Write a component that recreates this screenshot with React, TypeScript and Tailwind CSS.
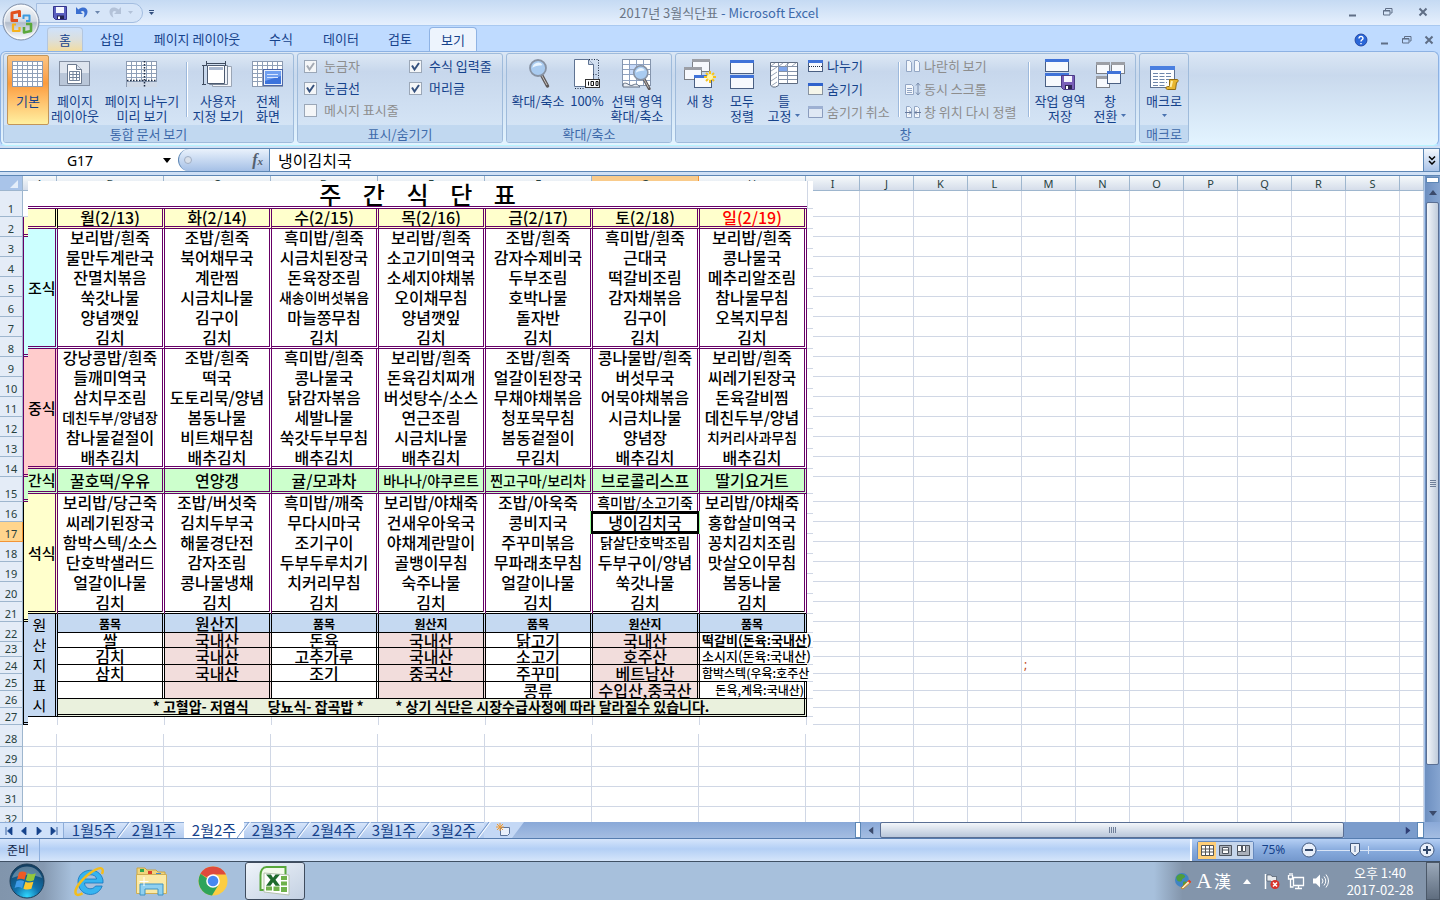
import React from 'react';
import clsx from 'clsx';

const COLUMNS = ['A', 'B', 'C', 'D', 'E', 'F', 'G', 'H', 'I', 'J', 'K', 'L', 'M', 'N', 'O', 'P', 'Q', 'R', 'S', ''];

const rowHeight = (row: number) => {
  if (row === 1) return 'h-[26px]';
  if (row === 15) return 'h-[25px]';
  if (row === 23) return 'h-[15px]';
  if (row >= 24 && row <= 27) return 'h-[17px]';
  if (row === 28) return 'h-[22px]';
  return 'h-[20px]';
};

// First column of the sheet: start row -> merged block
const MERGED: Record<number, { span: number; color: string }> = {
  2: { span: 1, color: 'bg-[#ffffcc] border-[#660066]' },
  3: { span: 6, color: 'bg-[#ccffff] border-[#660066]' },
  9: { span: 6, color: 'bg-[#ffcccc] border-[#660066]' },
  15: { span: 1, color: 'bg-[#ccffcc] border-[#660066]' },
  16: { span: 6, color: 'bg-[#ffffcc] border-black' },
  22: { span: 6, color: 'bg-[#c5d9f1] border-black' },
};

const DAYS = ['월(2/13)', '화(2/14)', '수(2/15)', '목(2/16)', '금(2/17)', '토(2/18)', '일(2/19)'];

const BREAKFAST = [
  ['보리밥/흰죽', '조밥/흰죽', '흑미밥/흰죽', '보리밥/흰죽', '조밥/흰죽', '흑미밥/흰죽', '보리밥/흰죽'],
  ['물만두계란국', '북어채무국', '시금치된장국', '소고기미역국', '감자수제비국', '근대국', '콩나물국'],
  ['잔멸치볶음', '계란찜', '돈육장조림', '소세지야채볶', '두부조림', '떡갈비조림', '메추리알조림'],
  ['쑥갓나물', '시금치나물', '새송이버섯볶음', '오이채무침', '호박나물', '감자채볶음', '참나물무침'],
  ['양념깻잎', '김구이', '마늘쫑무침', '양념깻잎', '돌자반', '김구이', '오복지무침'],
  ['김치', '김치', '김치', '김치', '김치', '김치', '김치'],
];

const LUNCH = [
  ['강낭콩밥/흰죽', '조밥/흰죽', '흑미밥/흰죽', '보리밥/흰죽', '조밥/흰죽', '콩나물밥/흰죽', '보리밥/흰죽'],
  ['들깨미역국', '떡국', '콩나물국', '돈육김치찌개', '얼갈이된장국', '버섯무국', '씨레기된장국'],
  ['삼치무조림', '도토리묵/양념', '닭감자볶음', '버섯탕수/소스', '무채야채볶음', '어묵야채볶음', '돈육갈비찜'],
  ['데친두부/양념장', '봄동나물', '세발나물', '연근조림', '청포묵무침', '시금치나물', '데친두부/양념'],
  ['참나물겉절이', '비트채무침', '쑥갓두부무침', '시금치나물', '봄동겉절이', '양념장', '치커리사과무침'],
  ['배추김치', '배추김치', '배추김치', '배추김치', '무김치', '배추김치', '배추김치'],
];

const SNACK = [['꿀호떡/우유', '연양갱', '귤/모과차', '바나나/야쿠르트', '찐고구마/보리차', '브로콜리스프', '딸기요거트']];

const DINNER = [
  ['보리밥/당근죽', '조밥/버섯죽', '흑미밥/깨죽', '보리밥/야채죽', '조밥/아욱죽', '흑미밥/소고기죽', '보리밥/야채죽'],
  ['씨레기된장국', '김치두부국', '무다시마국', '건새우아욱국', '콩비지국', '냉이김치국', '홍합살미역국'],
  ['함박스텍/소스', '해물경단전', '조기구이', '야채계란말이', '주꾸미볶음', '닭살단호박조림', '꽁치김치조림'],
  ['단호박샐러드', '감자조림', '두부두루치기', '골뱅이무침', '무파래초무침', '두부구이/양념', '맛살오이무침'],
  ['얼갈이나물', '콩나물냉채', '치커리무침', '숙주나물', '얼갈이나물', '쑥갓나물', '봄동나물'],
  ['김치', '김치', '김치', '김치', '김치', '김치', '김치'],
];

const ORIGINS = [
  ['쌀', '국내산', '돈육', '국내산', '닭고기', '국내산', '떡갈비(돈육:국내산)'],
  ['김치', '국내산', '고추가루', '국내산', '소고기', '호주산', '소시지(돈육:국내산)'],
  ['삼치', '국내산', '조기', '중국산', '주꾸미', '베트남산', '함박스텍(우육:호주산'],
  ['', '', '', '', '콩류', '수입산,중국산', '돈육,계육:국내산)'],
];

/* ---------- Icons ---------- */

const Caret = ({ className = '' }: { className?: string }) => (
  <svg viewBox="0 0 5 3" className={clsx('inline-block w-[5px] h-[3px]', className)} fill="currentColor">
    <path d="M0 0h5L2.5 3z" />
  </svg>
);

const Arrow = ({ className = '' }: { className?: string }) => (
  <svg viewBox="0 0 8 5" className={clsx('h-[5px] w-2', className)} fill="currentColor">
    <path d="M0 0h8L4 5z" />
  </svg>
);

const OfficeLogo = () => (
  <svg viewBox="0 0 38 38" className="size-[38px]">
    <defs>
      <linearGradient id="orb" x1="0" y1="0" x2="0" y2="1">
        <stop offset="0" stopColor="#f8fafc" />
        <stop offset=".48" stopColor="#d3dae4" />
        <stop offset=".52" stopColor="#b2bccb" />
        <stop offset="1" stopColor="#fdfeff" />
      </linearGradient>
    </defs>
    <circle cx="19" cy="19" r="18" fill="url(#orb)" stroke="#7f8fa8" />
    <circle cx="19" cy="19" r="16.5" fill="none" stroke="#fff" strokeOpacity=".7" />
    <g fill="none" strokeLinejoin="round">
      <path d="M16 17.500H10V10l7.500-1.500V14" stroke="#e2501c" strokeWidth="3" />
      <path d="M21.500 16v-3.500h6V18H24" stroke="#3c9be0" strokeWidth="2" />
      <path d="M14 21.500h-3v6.500h6.500v-4" stroke="#f6b21c" strokeWidth="2.200" />
      <path d="M24 21h5v7l-7 1.500V24" stroke="#5aa83a" strokeWidth="2.600" />
    </g>
  </svg>
);

const SaveIcon = () => (
  <svg viewBox="0 0 14 14" className="size-[14px]">
    <path d="M.5.5h13v13h-11l-2-2z" fill="#5a5fc0" stroke="#34348c" />
    <path d="M3 1h8v6H3z" fill="#f4f7ff" />
    <path d="M4 9.500h7V13H4z" fill="#23234f" />
    <path d="M5 10.500h2V13H5z" fill="#fff" />
  </svg>
);

const UndoIcon = ({ className = '' }: { className?: string }) => (
  <svg viewBox="0 0 14 13" className={clsx('w-[14px] h-[13px]', className)}>
    <path d="M1 1v7h7L5.600 5.700C8.500 3.800 10.800 5.500 8.600 11.800 14.600 8.200 13.300 1.100 7.600 1.600 5.900 1.800 4.500 2.600 3.400 3.500z" fill="currentColor" />
  </svg>
);

const GridIcon = ({ cols = 5, rows = 5 }: { cols?: number; rows?: number }) => (
  <g>
    <rect x=".5" y="3.500" width="30" height="25" fill="#fff" stroke="#8c9bb2" />
    {Array.from({ length: rows }, (_, i) => (
      <path key={i} d={`M1 ${7.5 + i * 4}h29`} stroke="#8fa0b8" />
    ))}
    {Array.from({ length: cols }, (_, i) => (
      <path key={`c${i}`} d={`M${5.5 + i * 5} 4v24`} stroke="#8fa0b8" />
    ))}
  </g>
);

const Icon32 = ({ children }: { children: React.ReactNode }) => (
  <svg viewBox="0 0 32 32" className="size-8 shrink-0">{children}</svg>
);

const MiniWindow = ({ x, y, w, h, gray = false }: { x: number; y: number; w: number; h: number; gray?: boolean }) => (
  <g>
    <rect x={x + 0.5} y={y + 0.5} width={w} height={h} fill="#f7f9fd" stroke={gray ? '#7b7f86' : '#4a5f82'} />
    <rect x={x} y={y} width={w + 1} height="3" fill={gray ? '#9c9fa6' : '#3f72d8'} />
  </g>
);

const NormalViewIcon = () => <Icon32><GridIcon /></Icon32>;

const PageLayoutIcon = () => (
  <Icon32>
    <rect x=".5" y="3.500" width="30" height="24" fill="#dde4ee" stroke="#8490a3" />
    <path d="M1 15h29v12H1z" fill="#b9c6d8" />
    <path d="M8.500 6.500h9l5 5v14h-14z" fill="#fff" stroke="#6c7a8f" />
    <path d="M17.500 6.500v5h5" fill="#dbe3ee" stroke="#6c7a8f" />
    <path d="M10.500 13.500h10v9h-10zM10.500 16.500h10M10.500 19.500h10M14 13.500v9M17.500 13.500v9" fill="none" stroke="#74849b" />
  </Icon32>
);

const PageBreakIcon = () => (
  <Icon32>
    <GridIcon />
    <path d="M1 24h30v5H1z" fill="#cfd9e7" />
    <path d="M1 22.500h30M18.500 3v26" stroke="#1e2c44" strokeWidth="1.500" strokeDasharray="1.500 1.500" />
  </Icon32>
);

const CustomViewIcon = () => (
  <Icon32>
    <path d="M10.500 8.500h19v20h-19z" fill="#f4f6fa" stroke="#9aa5b5" />
    <path d="M7.500 7.500h18v19h-18z" fill="#eef2f8" stroke="#7b8798" />
    <path d="M5.500 7.500h17v18h-17z" fill="#fff" stroke="#4c5a70" />
    <path d="M7 9h14v3H7z" fill="#a9b8d0" />
    <path d="M4 5.500h20M4.500 3v5M23.500 3v5M1.500 7v19M0 7.500h4M0 26.500h4" stroke="#3f4c60" fill="none" />
  </Icon32>
);

const FullScreenIcon = () => (
  <Icon32>
    <GridIcon />
    <rect x="11.500" y="11.500" width="19" height="16" fill="#e8f0fc" stroke="#4d68a8" />
    <rect x="13" y="13" width="16" height="13" fill="#3c73dc" />
    <path d="M13 13h16v5L13 23z" fill="#6f9ff0" />
    <path d="M15 16.500h11M15 19.500h11" stroke="#d6e5ff" />
  </Icon32>
);

const Magnifier = ({ x = 0, y = 0 }: { x?: number; y?: number }) => (
  <g transform={`translate(${x} ${y})`}>
    <path d="M13 16l6.500 12" stroke="#5f5a5a" strokeWidth="3.500" strokeLinecap="round" />
    <path d="M13.500 17l5.500 10" stroke="#c9c4c0" strokeWidth="1" />
    <circle cx="10" cy="10" r="8" fill="#a9cbf0" stroke="#8792a3" strokeWidth="1.800" />
    <path d="M4.500 10a5.500 5.500 0 0 1 10-3c-2 1-7 0-10 3z" fill="#e8f4ff" />
  </g>
);

const Zoom100Icon = () => (
  <Icon32>
    <path d="M3.500 1.500h14l5 5v22h-19z" fill="#fff" stroke="#5f7392" />
    <path d="M17.500 1.500v5h5" fill="#cdd9ea" stroke="#5f7392" />
    <path d="M18 1.500h9.500V22M4 30.500h10M22 16.500h5" fill="none" stroke="#1f2c45" strokeDasharray="1 1.500" />
    <rect x="14.500" y="21.500" width="14" height="8" fill="#fff" stroke="#333" />
    <path d="M17.500 23.500v4M20 23.500h2.500v4H20zM25 23.500h2v4h-2z" fill="none" stroke="#111" />
  </Icon32>
);

const ZoomSelectionIcon = () => (
  <Icon32>
    <rect x="1.500" y="1.500" width="28" height="26" fill="#fff" stroke="#8494ac" />
    <path d="M8 6h14v11H8z" fill="#c6dafa" />
    <path d="M2 6.500h27M2 11.500h27M2 16.500h27M2 22.500h27M8.500 2v25M15.500 2v25M22.500 2v25" stroke="#8fa2c0" />
    <path d="M2 26c4-3 6 3 10 1s5 0 7 2H2z" fill="#e9edf3" stroke="#5f6c80" />
    <g transform="translate(11 6) scale(.88)"><Magnifier /></g>
  </Icon32>
);

const NewWindowIcon = () => (
  <Icon32>
    <MiniWindow x={8} y={1} w={17} h={12} gray />
    <MiniWindow x={0} y={9} w={17} h={12} gray />
    <MiniWindow x={10} y={17} w={17} h={12} />
    <path d="M26 13v12M20 19h12M22 15l8 8M30 15l-8 8" stroke="#f6c21a" strokeWidth="2" />
    <circle cx="26" cy="19" r="3" fill="#fff6a8" />
  </Icon32>
);

const ArrangeIcon = () => (
  <Icon32>
    <MiniWindow x={4} y={2} w={23} h={13} />
    <MiniWindow x={4} y={17} w={23} h={13} />
  </Icon32>
);

const FreezeIcon = () => (
  <Icon32>
    <path d="M2.500 4.500h27v21h-19v2l-3 1.500h-3l-2-2z" fill="#fff" stroke="#5f6c80" />
    <path d="M10 8h10v5H10z" fill="#7fa5ea" />
    <path d="M3 8.500h26M10 13.500h19M10 17.500h19M10 21.500h19M10.500 5v23M19.500 5v20" stroke="#8593aa" />
    <path d="M3 8l4-3M11 8l4-3M17 8l4-3M24 8l4-3M3 13l6-4M3 18l6-4M3 23l6-4M3 28l6-4" stroke="#99a5b7" />
  </Icon32>
);

const SaveWorkspaceIcon = () => (
  <Icon32>
    <MiniWindow x={1} y={1} w={23} h={12} />
    <MiniWindow x={1} y={15} w={23} h={13} />
    <path d="M17.500 17.500h13v14h-11l-2-2z" fill="#7a5fb8" stroke="#4a3a86" />
    <path d="M20 18h8v6h-8z" fill="#f6f5ff" />
    <path d="M21 27h7v4h-7z" fill="#2c2450" />
    <path d="M22 28h2v3h-2z" fill="#fff" />
  </Icon32>
);

const SwitchWindowIcon = () => (
  <Icon32>
    <MiniWindow x={2} y={4} w={13} h={11} gray />
    <MiniWindow x={17} y={4} w={13} h={11} gray />
    <MiniWindow x={2} y={18} w={13} h={11} gray />
    <MiniWindow x={13} y={13} w={13} h={12} />
  </Icon32>
);

const MacroIcon = () => (
  <Icon32>
    <rect x="2.500" y="8.500" width="24" height="21" fill="#fdfeff" stroke="#5d7191" />
    <path d="M2 8h25v4H2z" fill="#4a7fe0" />
    <path d="M5 15.500h19M5 18.500h19M5 21.500h19M5 24.500h14M5 27.500h12" stroke="#6d86ab" strokeDasharray="5 1.500" />
    <path d="M21.500 21.500h8c1 0 1 3-1 3l-1 7h-8c-2 0-2-3 0-3h2z" fill="#e8b62f" stroke="#8f6a12" />
    <path d="M24 23l-1.500 6" stroke="#fff0a8" strokeWidth="2" />
  </Icon32>
);

const SmallIcon = ({ kind }: { kind: string }) => (
  <svg viewBox="0 0 16 14" className="w-4 h-[14px] shrink-0">
    {kind === 'split' && (
      <>
        <MiniWindow x={0} y={1} w={14} h={11} />
        <path d="M1 7.500h13" stroke="#1e2c44" strokeDasharray="1 1" />
      </>
    )}
    {kind === 'hide' && (
      <>
        <path d="M.5 1.500h14v11H.5z" fill="#f6f6ea" stroke="#333f55" strokeDasharray="1 1" />
        <path d="M0 1h15v3H0z" fill="#2f62cc" />
      </>
    )}
    {kind === 'unhide' && (
      <>
        <path d="M.5 1.500h14v11H.5z" fill="#dfe8f4" stroke="#8a9cbd" />
        <path d="M0 1h15v3H0z" fill="#9db0d2" />
      </>
    )}
    {kind === 'side' && <path d="M1.500 1.500h3l2 2v9h-5zM9.500 1.500h3l2 2v9h-5z" fill="#f3f7fc" stroke="#93a6c4" />}
    {kind === 'sync' && (
      <>
        <path d="M.5 2.500h6l2 2v8h-8zM2 6.500h5M2 8.500h5M2 10.500h5" fill="#f3f7fc" stroke="#93a6c4" />
        <path d="M13 1v12M11 3.500L13 1l2 2.500M11 10.500L13 13l2-2.500" fill="none" stroke="#7d8fae" />
      </>
    )}
    {kind === 'reset' && (
      <>
        <path d="M1.500 1.500h3l2 2v9h-5zM9.500 1.500h3l2 2v9h-5z" fill="#f3f7fc" stroke="#93a6c4" />
        <path d="M0 7.500h6M4 5.500l2 2-2 2M16 7.500h-6M12 5.500l-2 2 2 2" fill="none" stroke="#66799b" />
      </>
    )}
  </svg>
);

const WindowGlyph = ({ kind }: { kind: string }) => (
  <svg viewBox="0 0 10 10" className="size-[10px]" fill="none" stroke="#5f6e86">
    {kind === 'min' && <path d="M1 8.500h7" strokeWidth="2" />}
    {kind === 'restore' && <path d="M.5 3.500h6.500v4.500H.5zM.5 4h6.500M2.500 3V1.500h6.500V6H7.500" />}
    {kind === 'close' && <path d="M1.500 1.500l7 7M8.500 1.500l-7 7" strokeWidth="2" />}
  </svg>
);

/* ---------- Title bar and tabs ---------- */

const TitleBar = () => (
  <header className="relative z-10 flex h-[26px] items-center border-b border-[#a9c9f0] bg-linear-to-b from-[#c5daf3] to-[#e6f0fd]">
    <div className="absolute left-0.5 top-[3px] z-20">
      <button aria-label="Office" className="block rounded-full"><OfficeLogo /></button>
    </div>
    <div className="ml-9 flex h-5 w-[107px] items-center rounded-r-full border border-[#a3bde0] bg-[#d6e5f8] pl-4">
      <button aria-label="저장"><SaveIcon /></button>
      <button aria-label="실행 취소" className="ml-2 flex items-center gap-1.5 text-[#3b6fd0]">
        <UndoIcon /><Caret className="text-[#6c86ad]" />
      </button>
      <button aria-label="다시 실행" className="ml-2 flex items-center gap-1.5 text-[#b3c2d8]">
        <UndoIcon className="-scale-x-100" /><Caret />
      </button>
    </div>
    <button aria-label="빠른 실행 도구 모음" className="ml-1.5 flex flex-col items-center gap-px text-[#33507f]">
      <span className="h-px w-[5px] bg-[#33507f]" />
      <Caret />
    </button>
    <h1 className="flex-1 pr-16 text-center text-[13px] leading-5 text-[#3e6aaa]">
      <span className="text-[#6b7686]">2017년 3월식단표</span> - Microsoft Excel
    </h1>
    <div className="mr-3 flex w-[80px] items-center justify-between pb-0.5">
      <button aria-label="최소화"><WindowGlyph kind="min" /></button>
      <button aria-label="이전 크기로"><WindowGlyph kind="restore" /></button>
      <button aria-label="닫기"><WindowGlyph kind="close" /></button>
    </div>
  </header>
);

const TABS = [
  { label: '홈', cls: 'w-9 ml-[47px] mr-1 rounded-t border border-b-0 border-[#b3c6df] bg-linear-to-b from-[#cfe2fb] via-[#dcdfdc] to-[#f2dca0]' },
  { label: '삽입', cls: 'w-[50px] mr-1' },
  { label: '페이지 레이아웃', cls: 'w-[112px]' },
  { label: '수식', cls: 'w-[56px]' },
  { label: '데이터', cls: 'w-[64px]' },
  { label: '검토', cls: 'w-[54px]' },
  { label: '보기', cls: 'ml-0.5 w-12 rounded-t border border-b-0 border-[#8fb3e4] bg-[#edf4fd]' },
];

const RibbonTabs = () => (
  <nav className="flex h-[25px] items-end bg-[#bfdbff]">
    {TABS.map((tab) => (
      <button key={tab.label} className={clsx('h-6 whitespace-nowrap text-center text-[13px] leading-[22px] text-[#15428b]', tab.cls)}>
        {tab.label}
      </button>
    ))}
    <div className="ml-auto mr-1.5 flex items-center gap-3 pb-1">
      <button aria-label="도움말">
        <svg viewBox="0 0 14 14" className="size-[14px]">
          <circle cx="7" cy="7" r="6.500" fill="#2a66d8" stroke="#dfeaff" />
          <circle cx="7" cy="7" r="6" fill="none" stroke="#1f4aa6" />
          <path d="M5 5.500c0-3 4.200-2.600 4 0-.1 1.300-2 1.300-2 3M7 10v1.200" fill="none" stroke="#fff" strokeWidth="1.400" />
        </svg>
      </button>
      <button aria-label="창 최소화"><WindowGlyph kind="min" /></button>
      <button aria-label="창 이전 크기로"><WindowGlyph kind="restore" /></button>
      <button aria-label="창 닫기"><WindowGlyph kind="close" /></button>
    </div>
  </nav>
);

/* ---------- Ribbon ---------- */

const Group = ({ title, className, children }: { title: string; className: string; children: React.ReactNode }) => (
  <section className={clsx('flex flex-col overflow-hidden rounded-[3px] border border-[#9fbbdb] bg-linear-to-b from-[#dde8f5] via-[#c7d7ec] via-20% to-[#d8e8f8]', className)}>
    <div className="flex flex-1">{children}</div>
    <h2 className="h-[17px] bg-[#c1d8f0] text-center text-[13px] leading-[17px] text-[#3e6aaa]">{title}</h2>
  </section>
);

type BigButtonProps = { icon: React.ReactNode; lines: string[]; className: string; active?: boolean; caret?: boolean };

const BigButton = ({ icon, lines, className, active, caret }: BigButtonProps) => (
  <button
    className={clsx(
      'mt-px flex h-[70px] shrink-0 flex-col items-center whitespace-nowrap rounded-[2px] border pt-0.5 text-[13px] leading-[15px] text-[#15428b]',
      active ? 'border-[#c2955a] bg-linear-to-b from-[#fbc583] via-[#fb9b3c] via-40% to-[#fff0a0]' : 'border-transparent',
      className,
    )}
  >
    {icon}
    <span className="mt-[3px]">{lines[0]}</span>
    <span className="flex items-center gap-1">
      {lines[1]}
      {caret && <Caret className={clsx('text-[#4a73b0]', !lines[1] && 'mt-1.5')} />}
    </span>
  </button>
);

const Separator = () => <div className="my-2 w-px shrink-0 border-r border-white bg-[#9db9dc] box-content" />;

const Check = ({ id, label, checked, disabled }: { id: string; label: string; checked?: boolean; disabled?: boolean }) => (
  <div className="flex h-[22px] items-center gap-[7px]">
    <span className="relative flex size-[13px]">
      <input
        id={id}
        type="checkbox"
        defaultChecked={checked}
        disabled={disabled}
        className="peer size-[13px] appearance-none border border-[#9ba7b7] bg-[#f4f6f8]"
      />
      <svg viewBox="0 0 13 13" className={clsx('pointer-events-none absolute inset-0 hidden peer-checked:block', disabled ? 'text-[#a4aab3]' : 'text-[#36527f]')}>
        <path d="M3 5.500l2.500 4L10 3" fill="none" stroke="currentColor" strokeWidth="2" />
      </svg>
    </span>
    <label htmlFor={id} className={clsx('whitespace-nowrap text-[13px]', disabled ? 'text-[#8d8d8d]' : 'text-[#15428b]')}>{label}</label>
  </div>
);

const SmallButton = ({ kind, label, disabled }: { kind: string; label: string; disabled?: boolean }) => (
  <button disabled={disabled} className={clsx('flex h-[23px] items-center gap-[3px] whitespace-nowrap text-[13px]', disabled ? 'text-[#8d8d8d]' : 'text-[#15428b]')}>
    <SmallIcon kind={kind} />
    {label}
  </button>
);

const Ribbon = () => (
  <div className="mr-px flex h-[95px] gap-[3px] rounded-md border border-[#8db2e3] border-b-[#b6f4ff] bg-linear-to-b from-[#dbe7f5] via-[#c9d9ed] via-25% to-[#e3f4ff] px-0.5 pb-0.5 pt-px">
    <Group title="통합 문서 보기" className="w-[291px]">
      <BigButton active icon={<NormalViewIcon />} lines={['기본']} className="ml-[3px] w-[42px]" />
      <BigButton icon={<PageLayoutIcon />} lines={['페이지', '레이아웃']} className="w-[52px]" />
      <BigButton icon={<PageBreakIcon />} lines={['페이지 나누기', '미리 보기']} className="mr-[3px] w-[82px]" />
      <Separator />
      <BigButton icon={<CustomViewIcon />} lines={['사용자', '지정 보기']} className="w-[60px]" />
      <BigButton icon={<FullScreenIcon />} lines={['전체', '화면']} className="w-[40px]" />
    </Group>
    <Group title="표시/숨기기" className="w-[206px]">
      <div className="grid grid-cols-[105px_1fr] content-start pl-[6px] pt-px">
        <Check id="ruler" label="눈금자" checked disabled />
        <Check id="formula" label="수식 입력줄" checked />
        <Check id="gridlines" label="눈금선" checked />
        <Check id="headings" label="머리글" checked />
        <Check id="message" label="메시지 표시줄" disabled />
      </div>
    </Group>
    <Group title="확대/축소" className="w-[166px]">
      <BigButton icon={<Icon32><Magnifier x={6} /></Icon32>} lines={['확대/축소']} className="ml-[3px] w-[56px]" />
      <BigButton icon={<Zoom100Icon />} lines={['100%']} className="w-[42px]" />
      <BigButton icon={<ZoomSelectionIcon />} lines={['선택 영역', '확대/축소']} className="w-[58px]" />
    </Group>
    <Group title="창" className="w-[461px]">
      <BigButton icon={<NewWindowIcon />} lines={['새 창']} className="ml-0.5 w-[44px]" />
      <BigButton icon={<ArrangeIcon />} lines={['모두', '정렬']} className="w-[40px]" />
      <BigButton icon={<FreezeIcon />} lines={['틀', '고정']} caret className="w-[44px]" />
      <div className="w-[92px] pl-0.5">
        <SmallButton kind="split" label="나누기" />
        <SmallButton kind="hide" label="숨기기" />
        <SmallButton kind="unhide" label="숨기기 취소" disabled />
      </div>
      <Separator />
      <div className="w-[128px] pl-[5px]">
        <SmallButton kind="side" label="나란히 보기" disabled />
        <SmallButton kind="sync" label="동시 스크롤" disabled />
        <SmallButton kind="reset" label="창 위치 다시 정렬" disabled />
      </div>
      <Separator />
      <BigButton icon={<SaveWorkspaceIcon />} lines={['작업 영역', '저장']} className="w-[60px]" />
      <BigButton icon={<SwitchWindowIcon />} lines={['창', '전환']} caret className="w-[40px]" />
    </Group>
    <Group title="매크로" className="w-[50px]">
      <BigButton icon={<MacroIcon />} lines={['매크로', '']} caret className="w-[48px]" />
    </Group>
  </div>
);

/* ---------- Formula bar ---------- */

const FormulaBar = () => (
  <div className="bg-[#cfe0f5] pb-[3px] pt-0.5">
    <div className="flex h-6 border-y border-[#5d87b5] bg-white">
      <input aria-label="이름 상자" defaultValue="G17" className="w-[160px] text-center font-['Noto_Sans'] text-[14px] text-black outline-none" />
      <button aria-label="이름 목록" className="flex w-[18px] items-center pl-[3px] text-black"><Arrow /></button>
      <div className="flex w-[92px] items-center justify-between rounded-l-full border-l border-r border-[#5d87b5] bg-linear-to-b from-[#eaf2fc] to-[#a5c0e6] pl-[5px] pr-1.5">
        <span className="size-2 rounded-full border border-[#a0aec4] bg-[#d9e0ea]" />
        <button aria-label="함수 삽입" className="font-['Liberation_Serif'] text-[16px] font-bold italic leading-5 text-[#53606f]">
          f<span className="text-[11px]">x</span>
        </button>
      </div>
      <input aria-label="수식" defaultValue="냉이김치국" className="min-w-0 flex-1 pl-2 text-[16px] leading-[22px] text-black outline-none" />
      <button aria-label="수식 입력줄 확장" className="flex w-[17px] items-center justify-center border border-y-0 border-[#5d87b5] bg-linear-to-b from-[#f4f8fd] to-[#a9c3e8]">
        <svg viewBox="0 0 8 9" className="h-[9px] w-2" fill="none" stroke="#000" strokeWidth="1.500">
          <path d="M1 .5l3 3 3-3M1 5l3 3 3-3" />
        </svg>
      </button>
    </div>
  </div>
);

/* ---------- Sheet ---------- */

const SheetGrid = () => (
  <table className="w-full table-fixed border-separate border-spacing-0 font-['Noto_Sans'] text-[11px] text-[#27413e]">
    <colgroup>
      <col className="w-[23px]" />
      <col className="w-[34px]" />
      {COLUMNS.slice(1, 8).map((c) => <col key={c} className="w-[107px]" />)}
      {COLUMNS.slice(8, 19).map((c) => <col key={c} className="w-[54px]" />)}
      <col />
    </colgroup>
    <thead>
      <tr>
        <th aria-label="모두 선택" className="h-[15px] border-b border-r border-[#9eb6ce] bg-[#a9c4e9] p-0">
          <svg viewBox="0 0 20 13" className="block h-[13px] w-5"><path d="M18 3v8h-8z" fill="#e4eefa" /></svg>
        </th>
        {COLUMNS.map((c) => (
          <th
            key={c || 'rest'}
            className={clsx(
              'h-[15px] border-b border-r p-0 font-normal leading-[13px]',
              c === 'G' ? 'border-[#f29536] bg-[#f9cb8b]' : 'border-[#9eb6ce] bg-linear-to-b from-[#f6fafb] to-[#d5ddea]',
            )}
          >
            {c}
          </th>
        ))}
      </tr>
    </thead>
    <tbody>
      {Array.from({ length: 32 }, (_, i) => i + 1).map((row) => {
        const merged = MERGED[row];
        return (
          <tr key={row} className={rowHeight(row)}>
            <th
              className={clsx(
                'border-b border-r p-0 align-bottom font-normal leading-[14px]',
                row === 17 ? 'border-[#f29536] bg-[#ffd58d]' : 'border-[#9eb6ce] bg-[#e4ecf7]',
              )}
            >
              {row}
            </th>
            {merged && (
              <td rowSpan={merged.span} className={clsx('border-b-3 border-l border-double p-0', merged.color)} />
            )}
            {COLUMNS.slice(row > 1 && row < 28 ? 1 : 0).map((c) => (
              <td key={c || 'rest'} className="border-b border-r border-[#d0d7e5] p-0 pl-0.5 text-[12px] leading-[14px] text-[#c0430d]">
                {c === 'M' && row === 24 ? ';' : ''}
              </td>
            ))}
          </tr>
        );
      })}
    </tbody>
  </table>
);

const isLong = (text: string) => text.replace('/', '').length > 6;

const Meal = ({ name, rows, color, cell = '', tall, last }: { name: string; rows: string[][]; color: string; cell?: string; tall?: boolean; last?: boolean }) => (
  <>
    {rows.map((items, r) => (
      <tr key={r} className={tall ? 'h-[25px]' : 'h-5'}>
        {r === 0 && (
          <th rowSpan={rows.length} className={clsx('whitespace-nowrap border-b-3 border-r-3 border-double border-r-[#660066] p-0 text-[15px] font-medium leading-5', last ? 'border-b-black' : 'border-b-[#660066]', color)}>
            {name}
          </th>
        )}
        {items.map((item, d) => (
          <td
            key={d}
            className={clsx(
              'relative whitespace-nowrap border-r-3 border-double border-r-[#660066] p-0 text-center font-medium leading-[17px]',
              tall ? 'align-middle' : 'align-top',
              r === rows.length - 1 && 'border-b-3',
              last ? 'border-b-black' : 'border-b-[#660066]',
              isLong(item) ? 'text-[14px]' : 'text-[16px]',
              cell,
            )}
          >
            {item}
            {item === '냉이김치국' && (
              <span className="absolute -left-0.5 -right-0.5 -top-[3px] bottom-0 border-x-2 border-y-3 border-black shadow-[-1px_0_0_#99ff99,1px_0_0_#99ff99]" />
            )}
          </td>
        ))}
        <td className="border-b border-[#d0d7e5] p-0" />
      </tr>
    ))}
  </>
);

const WeeklyMenu = () => (
  <div className="absolute left-[28px] top-[5px] bg-white pb-[9px]">
    <table className="w-[785px] table-fixed border-separate border-spacing-0 text-black">
      <colgroup>
        <col className="w-[30px]" />
        {DAYS.map((d) => <col key={d} className="w-[107px]" />)}
        <col className="w-1.5" />
      </colgroup>
      <thead>
        <tr className="h-7">
          <th colSpan={8} className="whitespace-pre border-b-3 border-double border-[#660066] p-0 text-[24px] font-medium leading-[25px]">
            주    간    식    단    표
          </th>
          <td className="border-b border-l border-[#d0d7e5] p-0" />
        </tr>
        <tr className="h-5">
          <th className="border-b-3 border-r-3 border-double border-b-[#660066] border-r-black bg-[#ffffcc] p-0" />
          {DAYS.map((day, i) => (
            <th
              key={day}
              className={clsx('border-b-3 border-r-3 border-double border-[#660066] bg-[#ffffcc] p-0 text-[16px] font-medium leading-[17px]', i === 6 && 'text-[#ff0000]')}
            >
              {day}
            </th>
          ))}
          <td className="border-b border-[#d0d7e5] p-0" />
        </tr>
      </thead>
      <tbody>
        <Meal name="조식" rows={BREAKFAST} color="bg-[#ccffff]" />
        <Meal name="중식" rows={LUNCH} color="bg-[#ffcccc]" />
        <Meal name="간식" rows={SNACK} color="bg-[#ccffcc]" cell="bg-[#ccffcc]" tall />
        <Meal name="석식" rows={DINNER} color="bg-[#ffffcc]" last />
        <tr className="h-[19px]">
          <th rowSpan={6} className="border-b border-r-3 border-black bg-[#c5d9f1] p-0 pr-1 text-[15px] font-normal leading-5 [border-right-style:double]">
            원<br />산<br />지<br />표<br />시
          </th>
          {DAYS.map((d, i) => (
            <th
              key={d}
              className={clsx('border-b border-r-3 border-black bg-[#c5d9f1] p-0 leading-[17px] [border-right-style:double]', i === 1 ? 'text-[16px] font-medium' : 'text-[12px] font-bold')}
            >
              {i % 2 ? '원산지' : '품목'}
            </th>
          ))}
          <td className="border-b border-[#d0d7e5] p-0" />
        </tr>
        {ORIGINS.map((items, r) => (
          <tr key={r} className={r === 0 ? 'h-[15px]' : 'h-[17px]'}>
            {items.map((item, i) => (
              <td
                key={i}
                className={clsx(
                  'whitespace-nowrap border-b border-black p-0 leading-[14px]',
                  i < 6 && 'border-r-3 text-center text-[16px] font-medium [border-right-style:double]',
                  i === 6 && r === 0 && 'pl-0.5 text-[13px] font-bold',
                  i === 6 && r === 1 && 'pl-0.5 text-[13px] font-medium',
                  i === 6 && r === 2 && 'pl-0.5 text-[12px] font-medium',
                  i === 6 && r === 3 && 'border-r-3 text-right text-[12px] font-medium [border-right-style:double]',
                  i % 2 === 1 && 'bg-[#f2dddc]',
                )}
              >
                {item}
              </td>
            ))}
            <td className="border-b border-[#d0d7e5] p-0" />
          </tr>
        ))}
        <tr className="h-[18px]">
          <td colSpan={7} className="whitespace-pre border-b-3 border-r-3 border-double border-black bg-[#eaf1dd] p-0 text-center text-[14px] font-bold leading-[15px]">
            {'* 고혈압- 저염식      당뇨식- 잡곡밥 *          * 상기 식단은 시장수급사정에 따라 달라질수 있습니다.'}
          </td>
          <td className="border-b border-[#d0d7e5] p-0" />
        </tr>
        <tr className="h-2">
          {Array.from({ length: 9 }, (_, i) => (
            <td key={i} className={clsx('p-0', i < 8 && 'border-r border-[#d0d7e5]')} />
          ))}
        </tr>
      </tbody>
    </table>
  </div>
);

const VerticalScroll = () => (
  <div className="flex w-4 shrink-0 flex-col items-center border-l border-[#a9c4e9] bg-linear-to-r from-[#6d8fc0] to-[#86a5d1] px-px">
    <div className="mt-px h-[6px] w-full border border-[#5d87b5] bg-white" />
    <button aria-label="위로" className="flex h-[19px] w-full items-center justify-center text-[#3b4a6b]"><Arrow className="rotate-180" /></button>
    <div className="flex w-full flex-1 flex-col">
      <div className="flex flex-[564] flex-col items-center justify-center gap-px rounded-[2px] border border-[#5a6f94] bg-linear-to-r from-[#f3f6fa] to-[#c0ccdc]">
        {[0, 1, 2, 3].map((i) => <span key={i} className="h-px w-1.5 bg-[#6f7f99]" />)}
      </div>
      <div className="flex-[40]" />
    </div>
    <button aria-label="아래로" className="flex h-[17px] w-full items-center justify-center text-[#3b4a6b]"><Arrow /></button>
  </div>
);

const SHEETS = ['1월5주', '2월1주', '2월2주', '2월3주', '2월4주', '3월1주', '3월2주'];

const SheetTabs = () => (
  <div className="flex h-4 bg-linear-to-b from-[#8aa9d8] to-[#a4bde2]">
    <div className="flex w-16 items-center justify-around border-r border-t border-[#8eadd8] bg-[#cfe1fa] px-px text-[#15428b]">
      {['M1 0v8M7 0v8L2.500 4z', 'M6 0v8L1.500 4z', 'M2 0v8l4.500-4z', 'M7 0v8M1 0v8l4.500-4z'].map((d, i) => (
        <button key={d} aria-label={['처음', '이전', '다음', '마지막'][i]}>
          <svg viewBox="0 0 8 8" className="size-2" fill="currentColor" stroke="currentColor" strokeWidth=".8"><path d={d} /></svg>
        </button>
      ))}
    </div>
    {SHEETS.map((name, i) => (
      <button
        key={name}
        className={clsx(
          'relative w-[60px] border-t pb-0.5 text-center text-[15px] leading-[13px] text-[#15428b]',
          i === 2 ? 'border-white bg-white' : 'border-[#8eadd8] bg-linear-to-b from-[#d5e4fa] to-[#b2cbef]',
        )}
      >
        {name}
        {i !== 1 && (
          <svg viewBox="0 0 14 16" className="absolute -right-[7px] -top-px z-10 h-4 w-[14px]">
            <path d="M0 16L12 0" stroke="#6f93c8" />
            <path d="M1.500 16L13.500 0" stroke="#fff" />
          </svg>
        )}
      </button>
    ))}
    <button aria-label="워크시트 삽입" className="flex w-10 items-center justify-center bg-[#c4d8f5] [clip-path:polygon(0_0,100%_0,70%_100%,0_100%)]">
      <svg viewBox="0 0 16 14" className="h-[14px] w-4">
        <path d="M4.500 4.500h9v6l-2 2h-7z" fill="#e9f0fb" stroke="#5c7399" />
        <path d="M4 0v8M0 4h8M1 1l6 6M7 1L1 7" stroke="#f29a2e" />
      </svg>
    </button>
    <div className="flex-1" />
    <div className="flex w-[585px] items-stretch">
      <div className="w-1.5 border border-[#5d87b5] bg-white" />
      <button aria-label="왼쪽" className="flex w-[19px] items-center justify-center text-[#3b4a6b]"><Arrow className="rotate-90" /></button>
      <div className="flex flex-1">
        <div className="flex flex-[464] items-center justify-center gap-px rounded-[2px] border border-[#5a6f94] bg-linear-to-b from-[#f3f6fa] to-[#b9c7da]">
          {[0, 1, 2, 3].map((i) => <span key={i} className="h-1.5 w-px bg-[#6f7f99]" />)}
        </div>
        <div className="flex-[54] bg-[#7b9ccc]" />
      </div>
      <button aria-label="오른쪽" className="flex w-[19px] items-center justify-center bg-[#7b9ccc] text-[#2f3e74]"><Arrow className="-rotate-90" /></button>
      <div className="mr-4 w-[7px] border border-[#5d87b5] bg-white" />
    </div>
  </div>
);

/* ---------- Status bar ---------- */

const StatusBar = () => (
  <footer className="flex h-[23px] items-stretch border-t border-[#567db0] bg-linear-to-b from-[#d6e5fb] via-[#b3cff5] via-45% to-[#d5e5fa] text-[12px] text-[#15428b]">
    <span className="w-10 border-r border-[#8eb0de] pl-[7px] leading-[21px] text-[#15294b]">준비</span>
    <div className="flex-1" />
    <div className="flex items-center border-l-2 border-white bg-linear-to-b from-[#b5cff4] via-[#89acde] via-50% to-[#7498cd] pl-[5px] pr-[5px]">
      <div className="flex h-[19px] w-[57px] rounded-[2px] border border-[#6689bd]">
        <button aria-label="기본" className="flex flex-1 items-center justify-center bg-[#ffcf78]">
          <svg viewBox="0 0 13 11" className="h-[11px] w-[13px]" fill="#fff" stroke="#555"><path d="M.5.5h12v10H.5zM.5 4h12M.5 7h12M4.500.5v10M8.500.5v10" /></svg>
        </button>
        <button aria-label="페이지 레이아웃" className="flex flex-1 items-center justify-center bg-[#c6d6ec]">
          <svg viewBox="0 0 13 11" className="h-[11px] w-[13px]" fill="#aab0ba" stroke="#4d545f"><path d="M.5.5h12v10H.5z" /><path d="M3.500 2.500h6v6h-6zM4 5h5" fill="#fff" /></svg>
        </button>
        <button aria-label="페이지 나누기" className="flex flex-1 items-center justify-center bg-[#c6d6ec]">
          <svg viewBox="0 0 13 11" className="h-[11px] w-[13px]" fill="#aab0ba" stroke="#4d545f"><path d="M.5.5h12v10H.5z" /><path d="M.5.5h4v6h-4zM5.500.5h3v6h-3z" fill="#fff" /></svg>
        </button>
      </div>
      <button className="w-[47px] pr-2 text-center font-['Noto_Sans'] text-[12px]">75%</button>
      <button aria-label="축소">
        <svg viewBox="0 0 16 16" className="size-4"><circle cx="8" cy="8" r="7" fill="#e8effa" stroke="#41597f" /><path d="M4 8h8" stroke="#33496b" strokeWidth="2" /></svg>
      </button>
      <div className="relative flex h-4 w-[102px] items-center">
        <span className="h-px w-full bg-[#d8e4f6]" />
        <span className="absolute left-[51px] top-1 h-2 w-px bg-[#d8e4f6]" />
        <input type="range" aria-label="확대/축소 비율" min="10" max="400" defaultValue="75" className="absolute inset-0 w-full opacity-0" />
        <svg viewBox="0 0 10 14" className="pointer-events-none absolute left-[33px] top-px h-[14px] w-[10px]">
          <path d="M.5.5h9V9L5 13 .5 9z" fill="#e9eff8" stroke="#41597f" />
          <path d="M5 3v6" stroke="#9aabc6" strokeWidth="2" />
        </svg>
      </div>
      <button aria-label="확대">
        <svg viewBox="0 0 16 16" className="size-4"><circle cx="8" cy="8" r="7" fill="#e8effa" stroke="#41597f" /><path d="M4 8h8M8 4v8" stroke="#33496b" strokeWidth="2" /></svg>
      </button>
    </div>
  </footer>
);

/* ---------- Taskbar ---------- */

const StartOrb = () => (
  <svg viewBox="0 0 36 36" className="size-9">
    <defs>
      <radialGradient id="start" cx=".5" cy=".95" r=".9">
        <stop offset="0" stopColor="#2fd8ff" />
        <stop offset=".4" stopColor="#1273ad" />
        <stop offset="1" stopColor="#123f63" />
      </radialGradient>
    </defs>
    <circle cx="18" cy="18" r="17" fill="url(#start)" stroke="#1c3d58" />
    <path d="M3 15a15.500 15.500 0 0 1 30 0c-9-4-20-4-30 0z" fill="#fff" fillOpacity=".3" />
    <path d="M10 9.500c3-1.500 5-1 7.500.3l-2 7c-2.500-1.300-4.500-1.500-7.500-.3z" fill="#ee5a24" />
    <path d="M18.800 10.300c2.700 1.300 5 1.300 8 0l-2 7c-3 1.300-5.300 1-8 0z" fill="#93c83d" />
    <path d="M7.600 18c3-1.200 5-1 7.500.2l-2 7c-2.500-1.300-4.500-1.500-7.500-.3z" fill="#3f9be8" />
    <path d="M16.400 18.700c2.700 1.200 5 1.200 8 .1l-2 7c-3 1.200-5.300 1-8-.1z" fill="#fdc82f" />
  </svg>
);

const IeIcon = () => (
  <svg viewBox="0 0 32 32" className="size-8">
    <path d="M29 18H10.500c.3 6.500 8.500 7.500 11 3h6.700C23.500 34 4.500 31.500 4 17 3.800 3 26 .5 29 15zM10.600 14h12c-.6-5.500-11-5.800-12 0z" fill="#36b4f0" stroke="#1575bd" strokeWidth=".8" />
    <path d="M28 9c2-5 0-8-7-4C10 11-1 24 2 29c1 1.500 4 1 6.500-.7" fill="none" stroke="#f3bd1d" strokeWidth="2.500" />
  </svg>
);

const ExplorerIcon = () => (
  <svg viewBox="0 0 34 32" className="h-8 w-[34px]">
    <path d="M2 3h8l2 2h9l2 2h7v8H2z" fill="#f0d67c" stroke="#c9a544" />
    <path d="M5 4h4v3H5z" fill="#30a74c" />
    <path d="M13 6h4v3h-4z" fill="#d9402c" />
    <path d="M21 8h5v3h-5z" fill="#3b8ad8" />
    <path d="M1.500 9.500h30v19h-30z" fill="#fae9a6" stroke="#cfae55" />
    <path d="M5 30V19h23v11h-5v-6H10v6z" fill="#8fd0f0" stroke="#3f93c4" />
    <path d="M9 12v9M4.500 16.500h9" stroke="#fff" />
  </svg>
);

const ChromeIcon = () => (
  <svg viewBox="0 0 30 30" className="size-[30px]">
    <circle cx="15" cy="15" r="14.500" fill="#fccd42" />
    <path d="M15 15L2.400 7.800A14.500 14.500 0 0 1 27.600 7.800L27.800 8.500H15z" fill="#df4a3c" />
    <path d="M15 15l-6.500-3-6-4.200A14.500 14.500 0 0 0 14 29.500L21 18z" fill="#2ea45a" />
    <circle cx="15" cy="15" r="6.800" fill="#fff" />
    <circle cx="15" cy="15" r="5.300" fill="#4688f1" />
  </svg>
);

const ExcelIcon = () => (
  <svg viewBox="0 0 32 32" className="size-8">
    <path d="M7.500 2h19v23h-25v-15c0-4 2-8 6-8z" fill="#f3faec" stroke="#58a83c" strokeWidth="2" />
    <path d="M5 8l25 2v20L5 27z" fill="#fff" stroke="#b5c3ae" />
    <path d="M22 11h6v4h-6zM22 16.500h6v4h-6zM22 22h6v5h-6zM14.500 21.500h6v4.500h-6zM7 21.500h6v4H7z" fill="#6fb24a" />
    <path d="M7 9.500h5l2 3.200 2.500-3.200H21l-4.500 5.300 4.500 6h-4.500l-2.500-3.500-2.500 3.500H7l4.500-6z" fill="#1f6b2d" />
  </svg>
);

const Taskbar = () => (
  <div className="flex h-[39px] items-stretch border-t border-[#3f5064] bg-[#a7c0dc]">
    <div className="flex w-[72px] items-center bg-linear-to-r from-[#8195ac] via-[#8599b1] via-60% to-[#a7c0dc] pl-[9px]">
      <button aria-label="시작"><StartOrb /></button>
    </div>
    <button aria-label="Internet Explorer" className="ml-0.5 flex w-8 items-center"><IeIcon /></button>
    <button aria-label="탐색기" className="ml-[29px] flex w-[34px] items-center"><ExplorerIcon /></button>
    <button aria-label="Chrome" className="ml-[29px] flex w-[30px] items-center"><ChromeIcon /></button>
    <button aria-label="Microsoft Excel" className="ml-[17px] flex w-[60px] items-center justify-center rounded-[3px] border border-[#3f4c5e] bg-linear-to-br from-[#eff4fa] to-[#c3d0e2]"><ExcelIcon /></button>
    <div className="flex-1" />
    <div className="flex items-center bg-linear-to-r from-[#a7c0dc] to-[#8395ab] to-10% pl-5 text-white">
      <svg viewBox="0 0 18 18" className="mr-1 size-[18px]">
        <circle cx="8" cy="8" r="7" fill="#3f84c4" />
        <path d="M3 4c3-3 7-2 8 0s-3 2-3 4-4 2-5 0-1-3 0-4zM9 10c2-1 4 0 4 1s-2 3-4 3z" fill="#4f9d3c" />
        <path d="M7 16l8-8 2 2-8 7z" fill="#f5e6c0" stroke="#c0862c" />
        <path d="M14.500 8.500l2 2" stroke="#d33" strokeWidth="2" />
      </svg>
      <span className="w-[17px] font-['Liberation_Serif'] text-[22px] leading-7">A</span>
      <span className="w-[30px] pl-px text-[17px] leading-6">漢</span>
      <button aria-label="숨겨진 아이콘 표시" className="mr-3 flex w-2"><Arrow className="rotate-180" /></button>
      <svg viewBox="0 0 18 18" className="mr-1.5 size-[18px]">
        <path d="M2.500 2v15" stroke="#fff" strokeWidth="1.500" />
        <path d="M4 3h4l1 1.500h4.500V10H9L8 9H4z" fill="#fff" fillOpacity=".8" stroke="#3a4657" strokeWidth=".6" />
        <circle cx="12" cy="12.500" r="4.500" fill="#d8322a" />
        <path d="M10 10.500l4 4M14 10.500l-4 4" stroke="#fff" strokeWidth="1.500" />
      </svg>
      <svg viewBox="0 0 18 18" className="mr-1.5 size-[18px]" fill="none" stroke="#fff" strokeWidth="1.300">
        <path d="M6.500 5.500h10v8h-10zM8 16.500h7M11.500 14v2M1.500 3v4h4V3M3 1v3M5 1v3M3.500 7v8h3" />
      </svg>
      <svg viewBox="0 0 18 18" className="size-[18px]">
        <path d="M2 6.500h3l4-4v13l-4-4H2z" fill="#fff" />
        <path d="M11 6.500q2 2.500 0 5M13 4.500q3.500 4.500 0 9M15 2.500q5 6.500 0 13" fill="none" stroke="#fff" />
      </svg>
      <div className="w-[97px] pl-[5px] text-center text-[13px] leading-[17px]">
        <p>오후 1:40</p>
        <p>2017-02-28</p>
      </div>
      <button aria-label="바탕 화면 보기" className="h-full w-[14px] border border-[#4b5868] bg-linear-to-b from-[#9ba9ba] to-[#5f6d7f]" />
    </div>
  </div>
);

const App = () => {
  return (
    <div className="flex h-screen flex-col overflow-hidden bg-[#bfdbff] font-['Noto_Sans_CJK_KR',sans-serif]">
      <TitleBar />
      <RibbonTabs />
      <Ribbon />
      <FormulaBar />
      <main className="flex min-h-0 flex-1 border-t border-[#5d87b5] bg-white">
        <div className="relative min-w-0 flex-1 overflow-hidden">
          <SheetGrid />
          <WeeklyMenu />
        </div>
        <VerticalScroll />
      </main>
      <SheetTabs />
      <StatusBar />
      <Taskbar />
    </div>
  );
};

export default App;
